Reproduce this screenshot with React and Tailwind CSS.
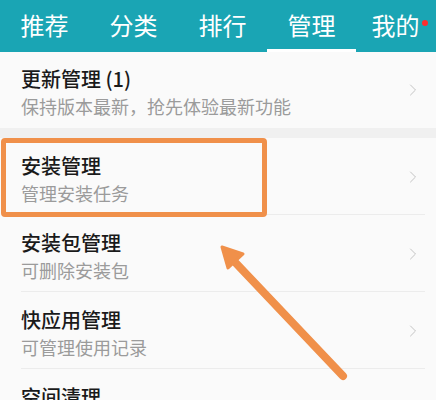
import { ChevronRight } from "lucide-react"

const TABS = [
  { label: "推荐" },
  { label: "分类" },
  { label: "排行" },
  { label: "管理", active: true },
  { label: "我的", dot: true },
]

const ROWS = [
  { title: "安装管理", sub: "管理安装任务", highlight: true },
  { title: "安装包管理", sub: "可删除安装包" },
  { title: "快应用管理", sub: "可管理使用记录" },
  { title: "空间清理", sub: "清理空间" },
]

function Row({ title, sub, last }) {
  return (
    <div className="relative flex h-[77px] items-center pl-[21px] pr-[11px]">
      <div className="flex-1 pt-[5px]">
        <div className="text-[20px] font-medium leading-[24px] text-[#1a1a1a]">{title}</div>
        <div className="mt-[4px] text-[18px] leading-[22px] text-[#9b9b9b]">{sub}</div>
      </div>
      <ChevronRight className="mr-[2px] h-[20px] w-[20px] text-[#c4c4c4]" strokeWidth={1.2} />
      {!last ? (
        <div className="absolute bottom-0 left-[21px] right-[11px] h-px bg-[#ececec]" />
      ) : null}
    </div>
  )
}

export default function App() {
  return (
    <div
      className="relative h-[400px] w-[436px] overflow-hidden bg-[#fafafa]"
      style={{ fontFamily: '"Noto Sans CJK SC", "Noto Sans", sans-serif' }}
    >
      <div className="flex h-[52px] bg-[#1aa5b4]">
        {TABS.map((tab) => (
          <div
            key={tab.label}
            className="relative flex w-[89px] shrink-0 items-center justify-center pb-[3px] text-[24px] text-white"
          >
            <span className={tab.dot ? "relative -ml-[10px]" : ""}>
              {tab.label}
              {tab.dot ? (
                <span className="absolute -right-[8px] top-[13px] h-[6px] w-[6px] rounded-full bg-[#ff2d2d]" />
              ) : null}
            </span>
            {tab.active ? (
              <div className="absolute bottom-0 left-0 right-0 h-[3px] bg-white" />
            ) : null}
          </div>
        ))}
      </div>

      <div className="flex h-[76px] items-center pl-[21px] pr-[11px]">
        <div className="flex-1 pt-[4px]">
          <div className="text-[20px] font-medium leading-[24px] text-[#1a1a1a]">更新管理 (1)</div>
          <div className="mt-[4px] text-[18px] leading-[22px] text-[#9b9b9b]">
            保持版本最新，抢先体验最新功能
          </div>
        </div>
        <ChevronRight className="mr-[2px] h-[20px] w-[20px] text-[#c4c4c4]" strokeWidth={1.2} />
      </div>

      <div className="h-[10px] bg-[#f0f0f0]" />

      {ROWS.map((row, i) => (
        <Row key={row.title} {...row} last={i === ROWS.length - 1} />
      ))}

      {/* annotation overlay */}
      <div className="absolute left-[1px] top-[138px] h-[79px] w-[266px] rounded-[4px] border-[5px] border-[#f0904a]" />
      <svg className="absolute inset-0" width="436" height="400" viewBox="0 0 436 400">
        <line x1="343" y1="376" x2="232" y2="259" stroke="#f0904a" strokeWidth="8" strokeLinecap="round" />
        <polygon points="222,247 243,254 228,268" fill="#f0904a" stroke="#f0904a" strokeWidth="3" strokeLinejoin="round" />
      </svg>
    </div>
  )
}
